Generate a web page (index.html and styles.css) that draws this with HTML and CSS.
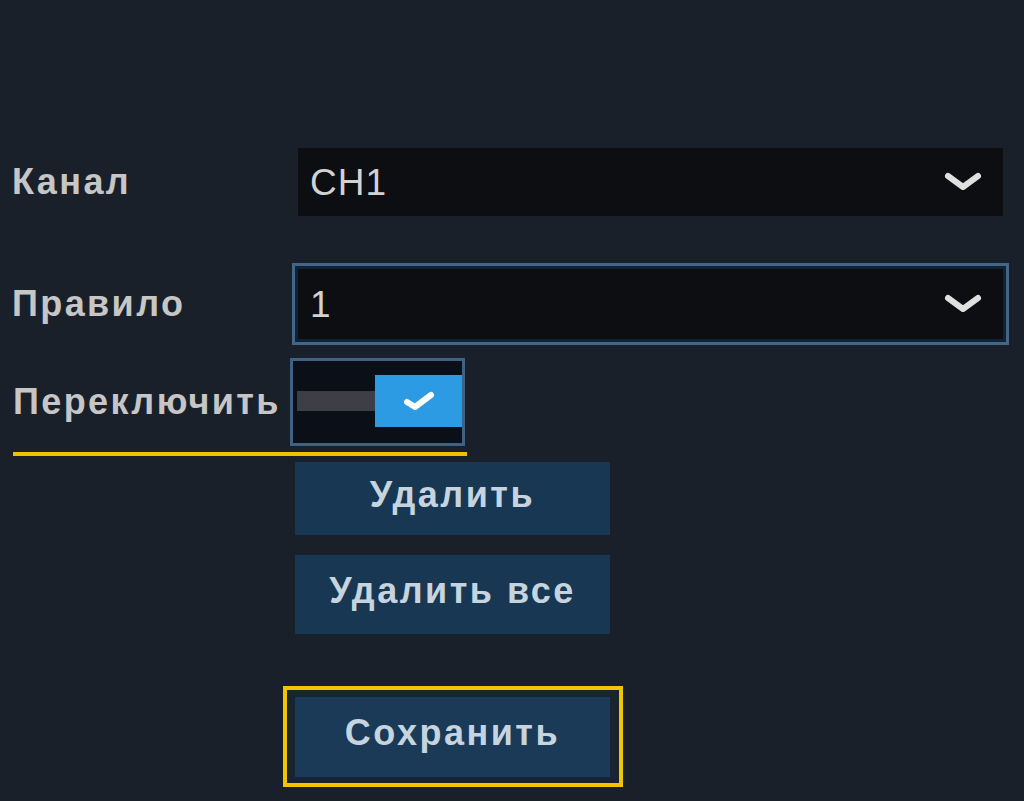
FILE: index.html
```html
<!DOCTYPE html>
<html lang="ru">
<head>
<meta charset="utf-8">
<title>Правило</title>
<link rel="stylesheet" href="styles.css">
</head>
<body>
<div class="page">
  <div class="row row-channel">
    <div class="label">Канал</div>
    <div class="field">
      <div class="select">
        <span class="select-value select-value-ch">CH1</span>
        <svg class="chev" viewBox="0 0 38 20" width="38" height="20"><path d="M4 4 L19 15 L34 4" fill="none" stroke="#e0e0e0" stroke-width="6" stroke-linecap="round" stroke-linejoin="round"/></svg>
      </div>
    </div>
  </div>
  <div class="row row-rule">
    <div class="label">Правило</div>
    <div class="field field-focus">
      <div class="select">
        <span class="select-value">1</span>
        <svg class="chev" viewBox="0 0 38 20" width="38" height="20"><path d="M4 4 L19 15 L34 4" fill="none" stroke="#e0e0e0" stroke-width="6" stroke-linecap="round" stroke-linejoin="round"/></svg>
      </div>
    </div>
  </div>
  <div class="row row-toggle">
    <div class="label label-toggle">Переключить</div>
    <div class="toggle">
      <div class="track"><div class="track-bar"></div></div>
      <div class="knob">
        <svg viewBox="0 0 32 22" width="32" height="22"><path d="M4 12 L12 17 L28 5" fill="none" stroke="#ffffff" stroke-width="6" stroke-linecap="round" stroke-linejoin="round"/></svg>
      </div>
    </div>
  </div>
  <div class="underline"></div>
  <div class="actions">
    <button class="btn btn-delete">Удалить</button>
    <button class="btn btn-delete-all">Удалить все</button>
  </div>
  <div class="save-frame">
    <button class="btn btn-save">Сохранить</button>
  </div>
</div>
</body>
</html>
```
FILE: styles.css
```css
* { box-sizing: border-box; }
html, body {
  margin: 0;
  padding: 0;
  background: #19202a;
  width: 1024px;
  height: 801px;
  overflow: hidden;
}
body {
  font-family: "Liberation Sans", Arial, sans-serif;
  color: #c9c9c9;
}
.page {
  padding-top: 142px;
  display: flex;
  flex-direction: column;
}
.row {
  display: flex;
  align-items: center;
}
.label {
  width: 292px;
  padding-left: 12px;
  font-size: 36px;
  font-weight: bold;
  letter-spacing: 2.4px;
  color: #c6c6c6;
}
.label-toggle { width: 290px; padding-left: 13px; }
.field {
  width: 717px;
  border: 3px solid transparent;
  padding: 3px;
}
.field-focus {
  border-color: #436687;
  background: #0f2338;
}
.row-rule { margin-top: 41px; }
.select {
  height: 68px;
  background: #0c0e11;
  display: flex;
  align-items: center;
  justify-content: space-between;
  padding: 0 21px 0 12px;
}
.field-focus .select { height: 70px; }
.select-value {
  font-size: 37px;
  color: #d2d2d2;
  letter-spacing: 1px;
  padding-top: 2px;
}
.select-value-ch { font-weight: normal; }
.chev { display: block; }
.row-toggle { margin-top: 13px; }
.toggle {
  width: 175px;
  height: 88px;
  border: 3px solid #3f6184;
  background: #0b1018;
  padding: 14px 0 16px 4px;
  display: flex;
}
.track {
  flex: 1;
  display: flex;
  align-items: center;
}
.track-bar {
  width: 100%;
  height: 20px;
  background: #3d3e46;
}
.knob {
  width: 87px;
  background: #2c9be3;
  display: flex;
  align-items: center;
  justify-content: center;
}
.knob svg { display: block; }
.underline {
  margin: 6px 0 0 13px;
  width: 454px;
  height: 4px;
  background: #f2c200;
}
.actions {
  display: flex;
  flex-direction: column;
  gap: 20px;
  margin: 6px 0 0 295px;
}
.btn {
  width: 315px;
  border: 0;
  background: #183753;
  color: #c6d4df;
  font-family: "Liberation Sans", Arial, sans-serif;
  font-size: 36px;
  font-weight: bold;
  letter-spacing: 2.5px;
  padding: 0 0 8px 0;
  display: block;
}
.btn-delete { height: 73px; }
.btn-delete-all { height: 79px; }
.save-frame {
  margin: 52px 0 0 283px;
  width: 340px;
  height: 101px;
  border: 4px solid #f2c500;
  background: #18252f;
  padding: 7px 9px 6px 8px;
}
.btn-save {
  height: 80px;
  background: #1a3a57;
}
```
